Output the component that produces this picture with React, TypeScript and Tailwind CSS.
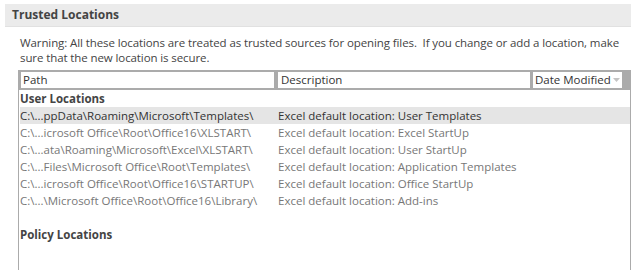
const userRows = [
  ['C:\\...ppData\\Roaming\\Microsoft\\Templates\\', 'Excel default location: User Templates'],
  ['C:\\...icrosoft Office\\Root\\Office16\\XLSTART\\', 'Excel default location: Excel StartUp'],
  ['C:\\...ata\\Roaming\\Microsoft\\Excel\\XLSTART\\', 'Excel default location: User StartUp'],
  ['C:\\...Files\\Microsoft Office\\Root\\Templates\\', 'Excel default location: Application Templates'],
  ['C:\\...icrosoft Office\\Root\\Office16\\STARTUP\\', 'Excel default location: Office StartUp'],
  ['C:\\...\\Microsoft Office\\Root\\Office16\\Library\\', 'Excel default location: Add-ins'],
]

export default function App() {
  return (
    <div className="h-[270px] w-[640px] overflow-hidden bg-white pt-[4px] font-['Open_Sans',sans-serif] text-[11.5px]">
      <div className="ml-[5px] flex h-[23px] w-[626px] items-center border-b border-[#e1e1e1] bg-[#ebebeb] pl-[7px] text-[12px] font-bold text-[#444]">
        Trusted Locations
      </div>

      <p className="mt-[8px] ml-[20px] whitespace-nowrap leading-[15px] tracking-[-0.1px] text-[#444]">
        Warning: All these locations are treated as trusted sources for opening files.&nbsp; If you change or add a
        location, make
        <br />
        sure that the new location is secure.
      </p>

      <div className="mt-[5px] ml-[18px] w-[613px]">
        <div className="flex h-[20px] bg-[#ababab] py-[2px] pl-[3px] text-[#333]">
          <div className="flex w-[253px] items-center bg-white pl-[2px]">Path</div>
          <div className="ml-[4px] flex w-[252px] items-center bg-white pl-[3px]">Description</div>
          <div className="ml-[3px] flex w-[89px] items-center justify-between whitespace-nowrap bg-white pl-[2px] pr-[2px]">
            <span>Date Modified</span>
            <svg width="7" height="4" viewBox="0 0 7 4">
              <path d="M0 0h7L3.5 4z" fill="#c4c4c4" />
            </svg>
          </div>
        </div>

        <div className="h-[200px] border-x border-[#ababab] pl-[1px]">
          <div className="h-[17px] font-bold leading-[17px] text-[#444]">User Locations</div>
          {userRows.map(([path, desc], i) => (
            <div
              key={i}
              className={
                i === 0
                  ? 'grid h-[17px] grid-cols-[258px_1fr] bg-[#e5e5e5] leading-[17px] text-[#333]'
                  : 'grid h-[17px] grid-cols-[258px_1fr] leading-[17px] text-[#777]'
              }
            >
              <span className="whitespace-nowrap">{path}</span>
              <span className="whitespace-nowrap">{desc}</span>
            </div>
          ))}
          <div className="h-[17px]" />
          <div className="h-[17px] font-bold leading-[17px] text-[#444]">Policy Locations</div>
        </div>
      </div>
    </div>
  )
}
